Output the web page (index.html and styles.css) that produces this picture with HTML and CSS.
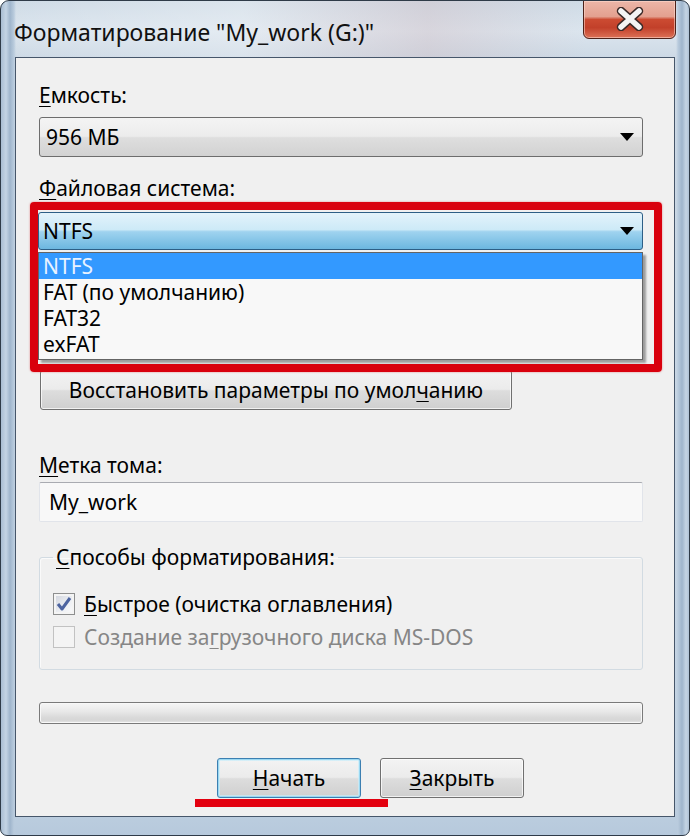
FILE: index.html
```html
<!DOCTYPE html>
<html lang="ru">
<head>
<meta charset="utf-8">
<title>Форматирование</title>
<link rel="stylesheet" href="styles.css">
</head>
<body>
<div class="window">
  <div class="titlebar">
    <div class="title">Форматирование "My_work (G:)"</div>
    <div class="close">
      <svg width="28" height="24" viewBox="0 0 28 24">
        <path d="M5 4 L23 20 M23 4 L5 20" stroke="#3b2a28" stroke-width="8.5" stroke-linecap="round" fill="none"/>
        <path d="M5 4 L23 20 M23 4 L5 20" stroke="#f4f4f4" stroke-width="5.5" stroke-linecap="round" fill="none"/>
      </svg>
    </div>
  </div>
  <div class="client">
    <div class="lbl"><u>Е</u>мкость:</div>
    <div class="combo"><span>956 МБ</span><span class="arrow"></span></div>

    <div class="lbl lbl-fs"><u>Ф</u>айловая система:</div>
    <div class="combo combo-open"><span>NTFS</span><span class="arrow"></span></div>

    <div class="btn btn-restore">Восстановить параметры по умол<u>ч</u>анию</div>

    <div class="lbl lbl-vol"><u>М</u>етка тома:</div>
    <div class="input">My_work</div>

    <fieldset class="group">
      <legend><u>С</u>пособы форматирования:</legend>
      <div class="check-row">
        <span class="checkbox checked">
          <svg width="18" height="18" viewBox="0 0 18 18"><path d="M3 9 L7 14 L15 3" stroke="#4d64a0" stroke-width="3" fill="none" stroke-linejoin="round"/></svg>
        </span>
        <span><u>Б</u>ыстрое (очистка оглавления)</span>
      </div>
      <div class="check-row disabled">
        <span class="checkbox"></span>
        <span>Создание за<u>г</u>рузочного диска MS-DOS</span>
      </div>
    </fieldset>

    <div class="progress"></div>

    <div class="buttons">
      <div class="btn btn-default"><u>Н</u>ачать</div>
      <div class="btn btn-close"><u>З</u>акрыть</div>
      <div class="underline-mark"></div>
    </div>

    <ul class="dropdown">
      <li class="selected">NTFS</li>
      <li>FAT (по умолчанию)</li>
      <li>FAT32</li>
      <li>exFAT</li>
    </ul>
    <div class="highlight-box"></div>
  </div>
</div>
</body>
</html>
```

FILE: styles.css
```css
* { box-sizing: border-box; }

body {
  margin: 0;
  background: #ffffff;
  font-family: "Noto Sans", "Open Sans", sans-serif;
  color: #000;
}

u { text-decoration: underline; text-underline-offset: 3px; text-decoration-thickness: 1px; }

.window {
  width: 690px;
  height: 836px;
  border: 1px solid #2f3b48;
  border-radius: 9px 9px 7px 7px;
  overflow: hidden;
  display: flex;
  flex-direction: column;
  background:
    linear-gradient(90deg, #a9bdd2 0px, #c4d4e4 5px, #9fb5cc 9px, #b9cbdd 13px, rgba(200,214,228,0) 15px, rgba(200,214,228,0) 675px, #b9cbdd 677px, #9fb5cc 681px, #c4d4e4 685px, #a9bdd2 689px),
    linear-gradient(180deg, #cfdbe6 0px, #dbe5ee 30px, #cdd9e5 57px, #c3d3e3 780px, #b6c9dc 836px);
}

.titlebar {
  height: 56px;
  flex: none;
  display: flex;
  justify-content: space-between;
  align-items: flex-start;
  padding: 0 13px 0 13px;
  background: linear-gradient(90deg, rgba(255,255,255,0) 0%, rgba(255,255,255,0.25) 35%, rgba(210,185,190,0.35) 62%, rgba(255,255,255,0) 85%);
}

.title {
  font-size: 23px;
  line-height: 28px;
  margin-top: 17px;
  color: #111;
}

.close {
  width: 93px;
  height: 39px;
  margin-top: -1px;
  border: 1px solid #4e2219;
  border-radius: 0 0 6px 6px;
  background: linear-gradient(180deg, #ecb6a8 0%, #e3a08f 42%, #cc4b32 50%, #c2402a 72%, #dc7156 100%);
  box-shadow: inset 0 0 0 1px rgba(255,220,210,0.55);
  display: flex;
  align-items: center;
  justify-content: center;
  padding-bottom: 2px;
}

.client {
  position: relative;
  height: 760px;
  flex: none;
  margin: 0 14px;
  border: 1px solid #46566a;
  background: #f0f0f0;
  padding: 25px 31px 0 23px;
}

.lbl {
  font-size: 21px;
  line-height: 24px;
}

.lbl-fs { margin-top: 19px; }
.lbl-vol { margin-top: 43px; }

.combo {
  height: 40px;
  margin-top: 10px;
  border: 1px solid #6d6d6d;
  border-radius: 3px;
  background: linear-gradient(180deg, #f4f4f4 0%, #ececec 48%, #dedede 52%, #d2d2d2 100%);
  display: flex;
  align-items: center;
  justify-content: space-between;
  padding: 0 8px 0 6px;
  font-size: 21px;
}

.combo-open {
  height: 38px;
  margin-top: 12px;
  margin-left: -1px;
  padding-left: 4px;
  border-color: #2d5f86;
  background: linear-gradient(180deg, #e3f3fb 0%, #cdeaf7 46%, #9fd3ef 52%, #6cb7e0 100%);
}

.arrow {
  width: 0;
  height: 0;
  border-left: 7px solid transparent;
  border-right: 7px solid transparent;
  border-top: 8px solid #000;
}

.btn {
  height: 40px;
  border: 1px solid #707070;
  border-radius: 3px;
  background: linear-gradient(180deg, #f3f3f3 0%, #ebebeb 48%, #dddddd 52%, #cfcfcf 100%);
  box-shadow: inset 0 0 0 1px rgba(255,255,255,0.7);
  display: flex;
  align-items: center;
  justify-content: center;
  font-size: 21px;
}

.btn-restore {
  width: 472px;
  margin-top: 120px;
  margin-left: 1px;
}

.input {
  height: 40px;
  margin-top: 5px;
  border: 1px solid #e1e4ea;
  border-top-color: #a9abb1;
  border-radius: 2px;
  background: #f8f8f8;
  font-size: 21px;
  display: flex;
  align-items: center;
  padding-left: 9px;
}

.group {
  margin: 23px 0 0 0;
  padding: 20px 0 17px 13px;
  border: 1px solid #d2dbe2;
  border-radius: 3px;
  box-shadow: inset 1px 1px 0 #fafafa;
  min-width: 0;
}

.group legend {
  margin-left: 0;
  padding: 0 3px;
  font-size: 21px;
  line-height: 24px;
}

.check-row {
  display: flex;
  align-items: center;
  gap: 9px;
  height: 30px;
  font-size: 21px;
}

.check-row + .check-row { margin-top: 3px; }

.checkbox {
  width: 22px;
  height: 22px;
  flex: none;
  border: 1px solid #8e8f8f;
  background: linear-gradient(135deg, #dcdcdc 0%, #f4f4f4 60%, #ffffff 100%);
  box-shadow: inset 0 0 0 2px #f4f4f4;
  display: flex;
  align-items: center;
  justify-content: center;
}

.checkbox.checked {
  background: linear-gradient(135deg, #cfd3dc 0%, #eef0f4 60%, #fbfbfb 100%);
}

.disabled { color: #868686; }
.disabled .checkbox {
  border-color: #c2c2c2;
  background: #f4f4f4;
  box-shadow: none;
}

.progress {
  height: 22px;
  margin-top: 32px;
  border: 1px solid #7a7a7a;
  border-radius: 3px;
  background: linear-gradient(180deg, #f6f6f6 0%, #e9e9e9 40%, #dadada 70%, #d6d6d6 85%, #e6e6e6 100%);
  box-shadow: inset 0 0 0 1px #f8f8f8;
}

.buttons {
  position: relative;
  display: flex;
  gap: 19px;
  margin-top: 34px;
  padding-left: 178px;
}

.buttons .btn { width: 144px; }

.btn-default {
  border-color: #3c7fb1;
  box-shadow: inset 0 0 0 1px #9ad8f2, inset 0 0 0 2px rgba(200,236,250,0.7);
}

.underline-mark {
  position: absolute;
  left: 156px;
  top: 41px;
  width: 193px;
  height: 8px;
  background: #e3000f;
}

.dropdown {
  position: absolute;
  left: 22px;
  top: 194px;
  width: 605px;
  height: 108px;
  margin: 0;
  padding: 0;
  list-style: none;
  background: #f8f8f8;
  border: 1px solid #646464;
  box-shadow: 3px 3px 2px rgba(0,0,0,0.35);
  font-size: 21px;
}

.dropdown li {
  height: 26px;
  line-height: 26px;
  padding-left: 4px;
}

.dropdown li.selected {
  background: #3399ff;
  color: #e8f2ff;
}

.highlight-box {
  position: absolute;
  left: 14px;
  top: 144px;
  width: 632px;
  height: 170px;
  border: 8px solid #d9000d;
  border-radius: 4px;
  box-shadow: 0 0 2px rgba(217,0,13,0.5);
}
```
